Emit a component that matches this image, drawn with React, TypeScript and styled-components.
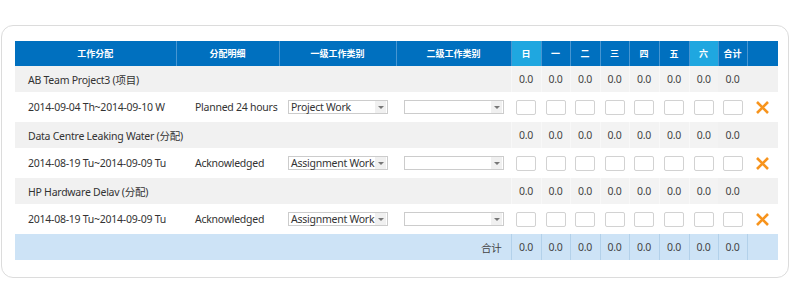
import React from 'react';
import styled, { createGlobalStyle, css } from 'styled-components';

const GlobalStyle = createGlobalStyle`
  body {
    margin: 0;
    background: #ffffff;
    font-family: "Noto Sans", "Noto Sans CJK SC", sans-serif;
    color: #333333;
  }
`;

const Card = styled.div`
  box-sizing: border-box;
  width: 788px;
  margin: 25px 0 0 1px;
  padding: 15px 10px 17px 13px;
  border: 1px solid #dcdcdc;
  border-radius: 12px;
  background: #ffffff;
`;

const Table = styled.table`
  width: 763px;
  border-collapse: collapse;
  table-layout: fixed;
  font-size: 10.5px;
  letter-spacing: -0.25px;
`;

const HeadCell = styled.th<{ $light?: boolean }>`
  height: 25px;
  padding: 0;
  background: ${({ $light }) => ($light ? '#1fa7e0' : '#0070bf')};
  color: #ffffff;
  font-size: 9px;
  font-weight: bold;
  letter-spacing: 0;
  text-align: center;
  border-left: 1px solid #4796d2;
  &:first-child {
    border-left: none;
  }
`;

const GroupRow = styled.tr`
  height: 26px;
  background: #f1f1f1;
`;

const DetailRow = styled.tr`
  height: 30px;
  background: #ffffff;
`;

const FooterRow = styled.tr`
  height: 26px;
  background: #cde3f6;
`;

const Cell = styled.td<{ $pad?: number }>`
  padding: 0 0 0 ${({ $pad }) => $pad ?? 0}px;
  text-align: left;
  white-space: nowrap;
  overflow: hidden;
  color: #333333;
`;

const DayValue = styled.td<{ $group?: boolean }>`
  padding: 0;
  text-align: center;
  color: #444444;
  ${({ $group }) =>
    $group &&
    css`
      background: #f3f3f3;
      border-left: 1px solid #f8f8f8;
    `}
`;

const FootLabel = styled.td`
  padding: 0 9px 0 0;
  text-align: right;
  color: #444444;
`;

const FootValue = styled.td`
  padding: 0;
  text-align: center;
  color: #444444;
  border-left: 1px solid #b3d1ea;
`;

const SelectBox = styled.div<{ $width: number }>`
  box-sizing: border-box;
  display: flex;
  align-items: center;
  justify-content: space-between;
  width: ${({ $width }) => $width}px;
  height: 14px;
  border: 1px solid #cccccc;
  background: #ffffff;
  line-height: 12px;
  color: #333333;
`;

const SelectText = styled.span`
  padding-left: 2px;
`;

const SelectArrow = styled.span`
  display: flex;
  align-items: center;
  justify-content: center;
  flex: none;
  width: 11px;
  height: 12px;
  margin-right: 1px;
  background: #f0f0f0;
  &::after {
    content: '';
    border-left: 3px solid transparent;
    border-right: 3px solid transparent;
    border-top: 3px solid #777777;
  }
`;

const HoursInput = styled.input`
  box-sizing: border-box;
  display: block;
  width: 20px;
  height: 15px;
  margin: 0 auto;
  padding: 0;
  border: 1px solid #d2d2d2;
  border-radius: 2px;
  background: #ffffff;
  outline: none;
`;

const RemoveButton = styled.button`
  display: block;
  margin: 0 0 0 8px;
  padding: 0;
  border: none;
  background: none;
  cursor: pointer;
  line-height: 0;
`;

const days = ['日', '一', '二', '三', '四', '五', '六'];
const widths = [161, 103, 117, 115, 30, 29, 30, 29, 30, 30, 29, 29, 31];

type Item = {
  group: string;
  range: string;
  detail: string;
  category: string;
};

const items: Item[] = [
  {
    group: 'AB Team Project3 (项目)',
    range: '2014-09-04 Th~2014-09-10 W',
    detail: 'Planned 24 hours',
    category: 'Project Work',
  },
  {
    group: 'Data Centre Leaking Water (分配)',
    range: '2014-08-19 Tu~2014-09-09 Tu',
    detail: 'Acknowledged',
    category: 'Assignment Work',
  },
  {
    group: 'HP Hardware Delav (分配)',
    range: '2014-08-19 Tu~2014-09-09 Tu',
    detail: 'Acknowledged',
    category: 'Assignment Work',
  },
];

const CrossIcon = () => (
  <svg width="15" height="15" viewBox="0 0 15 15">
    <path
      d="M2 2 L13 13 M13 2 L2 13"
      stroke="#f7941d"
      strokeWidth="2.6"
      strokeLinecap="butt"
    />
  </svg>
);

const Select = ({ value, width }: { value: string; width: number }) => (
  <SelectBox $width={width}>
    <SelectText>{value}</SelectText>
    <SelectArrow />
  </SelectBox>
);

const App = () => {
  return (
    <>
      <GlobalStyle />
      <Card>
        <Table>
          <colgroup>
            {widths.map((w, i) => (
              <col key={i} style={{ width: w }} />
            ))}
          </colgroup>
          <thead>
            <tr>
              <HeadCell>工作分配</HeadCell>
              <HeadCell>分配明细</HeadCell>
              <HeadCell>一级工作类别</HeadCell>
              <HeadCell>二级工作类别</HeadCell>
              {days.map((d, i) => (
                <HeadCell key={d} $light={i === 0 || i === 6}>
                  {d}
                </HeadCell>
              ))}
              <HeadCell>合计</HeadCell>
              <HeadCell />
            </tr>
          </thead>
          <tbody>
            {items.map((item) => (
              <React.Fragment key={item.group}>
                <GroupRow>
                  <Cell $pad={13} colSpan={4}>
                    {item.group}
                  </Cell>
                  {days.map((d) => (
                    <DayValue key={d} $group>
                      0.0
                    </DayValue>
                  ))}
                  <DayValue>0.0</DayValue>
                  <Cell />
                </GroupRow>
                <DetailRow>
                  <Cell $pad={13}>{item.range}</Cell>
                  <Cell $pad={19}>{item.detail}</Cell>
                  <Cell $pad={9}>
                    <Select value={item.category} width={100} />
                  </Cell>
                  <Cell $pad={8}>
                    <Select value="" width={100} />
                  </Cell>
                  {days.map((d) => (
                    <Cell key={d}>
                      <HoursInput />
                    </Cell>
                  ))}
                  <Cell>
                    <HoursInput />
                  </Cell>
                  <Cell>
                    <RemoveButton aria-label="remove">
                      <CrossIcon />
                    </RemoveButton>
                  </Cell>
                </DetailRow>
              </React.Fragment>
            ))}
            <FooterRow>
              <FootLabel colSpan={4}>合计</FootLabel>
              {days.map((d) => (
                <FootValue key={d}>0.0</FootValue>
              ))}
              <FootValue>0.0</FootValue>
              <FootValue />
            </FooterRow>
          </tbody>
        </Table>
      </Card>
    </>
  );
};

export default App;
